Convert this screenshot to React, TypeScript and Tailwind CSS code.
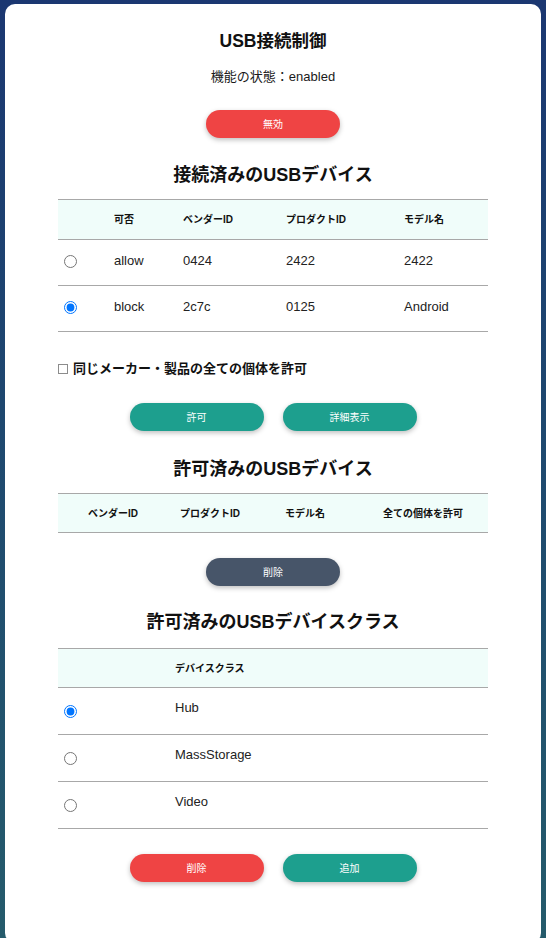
import { useState } from 'react';

const font = "font-['Liberation_Sans','Noto_Sans_CJK_JP',sans-serif]";

const devices = [
  { id: 'a', state: 'allow', vendor: '0424', product: '2422', model: '2422' },
  { id: 'b', state: 'block', vendor: '2c7c', product: '0125', model: 'Android' },
];

const classes = ['Hub', 'MassStorage', 'Video'];

function Pill({ color, children }: { color: string; children: React.ReactNode }) {
  return (
    <button
      className={`h-[28px] w-[134px] rounded-full text-[10px] text-white shadow-[0_2px_5px_rgba(0,0,0,0.25)] ${color}`}
    >
      {children}
    </button>
  );
}

function Heading({ children }: { children: React.ReactNode }) {
  return <h2 className="text-center text-[18px] font-bold leading-[28px] text-[#111]">{children}</h2>;
}

export default function App() {
  const [device, setDevice] = useState('b');
  const [cls, setCls] = useState('Hub');
  const [all, setAll] = useState(false);

  return (
    <div className={`min-h-screen bg-gradient-to-b from-[#1b3771] to-[#255b6b] px-[5px] pt-[4px] pb-[5px] ${font}`}>
      <div className="flex flex-col items-center rounded-[10px] bg-white px-[53px] pt-[23px] pb-[61px] text-[#222]">
        <h1 className="text-[17.5px] font-bold leading-[28px] text-[#111]">USB接続制御</h1>
        <p className="mt-[12px] text-[13px] leading-[20px] text-[#1a1a1a]">機能の状態：enabled</p>

        <div className="mt-[23px]">
          <Pill color="bg-[#ef4444]">無効</Pill>
        </div>

        <div className="mt-[23px]">
          <Heading>接続済みのUSBデバイス</Heading>
        </div>

        {/* connected devices */}
        <div className="mt-[10px] w-full border-t border-[#a8a8a8] text-[13px]">
          <div className="grid h-[40px] grid-cols-[56px_69px_103px_118px_1fr] items-center border-b border-[#a8a8a8] bg-[#f0fdfa] text-[10px] font-bold text-[#111]">
            <span />
            <span>可否</span>
            <span>ベンダーID</span>
            <span>プロダクトID</span>
            <span>モデル名</span>
          </div>
          {devices.map((d) => (
            <div
              key={d.id}
              className="grid h-[46px] grid-cols-[56px_69px_103px_118px_1fr] items-center border-b border-[#a8a8a8] pb-[4px]"
            >
              <span className="flex pl-[6px] pt-[2px]">
                <input
                  type="radio"
                  name="device"
                  className="m-0 h-[13px] w-[13px]"
                  checked={device === d.id}
                  onChange={() => setDevice(d.id)}
                />
              </span>
              <span>{d.state}</span>
              <span>{d.vendor}</span>
              <span>{d.product}</span>
              <span>{d.model}</span>
            </div>
          ))}
        </div>

        <label className="mt-[27px] flex w-full items-center gap-[5px] text-[13px] font-bold leading-[20px] text-[#111]">
          <input
            type="checkbox"
            className="m-0 h-[10px] w-[10px] appearance-none border border-[#8c8c8c] bg-white checked:bg-[#1a73e8]"
            checked={all}
            onChange={() => setAll(!all)}
          />
          同じメーカー・製品の全ての個体を許可
        </label>

        <div className="mt-[24px] flex gap-[19px]">
          <Pill color="bg-[#1d9f8e]">許可</Pill>
          <Pill color="bg-[#1d9f8e]">詳細表示</Pill>
        </div>

        <div className="mt-[24px]">
          <Heading>許可済みのUSBデバイス</Heading>
        </div>

        {/* allowed devices */}
        <div className="mt-[10px] w-full border-t border-[#a8a8a8]">
          <div className="grid h-[39px] grid-cols-[110px_84px_106px_1fr] items-center border-b border-[#a8a8a8] bg-[#f0fdfa] text-center text-[10px] font-bold text-[#111]">
            <span>ベンダーID</span>
            <span>プロダクトID</span>
            <span>モデル名</span>
            <span>全ての個体を許可</span>
          </div>
        </div>

        <div className="mt-[25px]">
          <Pill color="bg-[#475569]">削除</Pill>
        </div>

        <div className="mt-[22px]">
          <Heading>許可済みのUSBデバイスクラス</Heading>
        </div>

        {/* device classes */}
        <div className="mt-[12px] w-full border-t border-[#a8a8a8] text-[13px]">
          <div className="grid h-[39px] grid-cols-[117px_1fr] items-center border-b border-[#a8a8a8] bg-[#f0fdfa] text-[10px] font-bold text-[#111]">
            <span />
            <span>デバイスクラス</span>
          </div>
          {classes.map((c) => (
            <div
              key={c}
              className="grid h-[47px] grid-cols-[117px_1fr] items-center border-b border-[#a8a8a8] pb-[6px]"
            >
              <span className="flex pl-[6px] pt-[6px]">
                <input
                  type="radio"
                  name="cls"
                  className="m-0 h-[13px] w-[13px]"
                  checked={cls === c}
                  onChange={() => setCls(c)}
                />
              </span>
              <span>{c}</span>
            </div>
          ))}
        </div>

        <div className="mt-[25px] flex gap-[19px]">
          <Pill color="bg-[#ef4444]">削除</Pill>
          <Pill color="bg-[#1d9f8e]">追加</Pill>
        </div>
      </div>
    </div>
  );
}
